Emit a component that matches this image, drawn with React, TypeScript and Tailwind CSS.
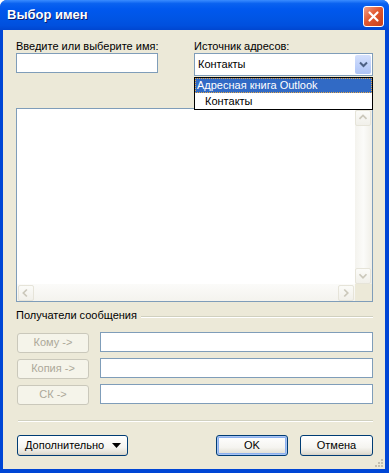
import React from "react";

const font = { fontFamily: '"Liberation Sans", Arial, sans-serif' };

function XpButton({
  children,
  className = "",
  isDefault = false,
  disabled = false,
}: {
  children: React.ReactNode;
  className?: string;
  isDefault?: boolean;
  disabled?: boolean;
}) {
  if (disabled) {
    return (
      <div
        className={`flex items-center justify-center rounded-[3px] border border-[#cac8bb] bg-[#f5f4ea] text-[11px] text-[#aca899] ${className}`}
      >
        {children}
      </div>
    );
  }
  return (
    <div
      className={`flex items-center justify-center rounded-[3px] border border-[#003c74] bg-[linear-gradient(180deg,#ffffff_0%,#f5f4f0_60%,#e3e0d6_90%,#d6d0c5_100%)] text-[11px] text-black ${
        isDefault ? "shadow-[inset_0_0_0_1px_#a9c4f3,inset_0_0_0_2px_#8cb0ee]" : ""
      } ${className}`}
    >
      {children}
    </div>
  );
}

function ScrollBtn({ dir }: { dir: "up" | "down" | "left" | "right" }) {
  const paths: Record<string, string> = {
    up: "M4 9 L8 5 L12 9",
    down: "M4 6 L8 10 L12 6",
    left: "M9 4 L5 8 L9 12",
    right: "M6 4 L10 8 L6 12",
  };
  return (
    <div className="flex h-[16px] w-[16px] items-center justify-center rounded-[2px] border border-[#e6e4d9] bg-[linear-gradient(180deg,#fbfbf8_0%,#f1f0ea_100%)]">
      <svg width="16" height="16" viewBox="0 0 16 16">
        <path d={paths[dir]} fill="none" stroke="#cbc8bb" strokeWidth="2" />
      </svg>
    </div>
  );
}

export default function App() {
  return (
    <div
      className="flex h-[473px] w-[389px] flex-col overflow-hidden rounded-t-[7px] bg-[#0046d5]"
      style={font}
    >
      {/* title bar */}
      <div className="flex h-[30px] shrink-0 items-center bg-[linear-gradient(180deg,#3a8cff_0%,#0a62f0_12%,#0058ee_30%,#0055e5_60%,#0050de_85%,#0046d0_100%)] pl-[7px] pr-[5px]">
        <span className="text-[13px] font-bold text-white [text-shadow:1px_1px_0_#0a1e6e]">
          Выбор имен
        </span>
        <div className="flex-1" />
        <div className="mt-[2px] flex h-[21px] w-[21px] items-center justify-center rounded-[3px] border border-white bg-[linear-gradient(135deg,#f0a08a_0%,#e2582f_45%,#c7401a_100%)]">
          <svg width="13" height="13" viewBox="0 0 13 13">
            <path d="M2.5 2.5 L10.5 10.5 M10.5 2.5 L2.5 10.5" stroke="#fff" strokeWidth="2.2" strokeLinecap="round" />
          </svg>
        </div>
      </div>

      {/* body */}
      <div className="relative mb-[4px] ml-[3px] mr-[4px] flex flex-1 flex-col bg-[#ece9d8] pl-[13px] pr-[12px] pt-[10px] text-[11px] leading-[13px] text-black">
        <div className="flex">
          <div className="flex w-[142px] flex-col">
            <span className="whitespace-nowrap">Введите или выберите имя:</span>
            <div className="h-[20px] border border-[#7f9db9] bg-white" />
          </div>
          <div className="ml-[36px] flex w-[179px] flex-col">
            <span className="whitespace-nowrap">Источник адресов:</span>
            <div className="flex h-[23px] items-center border border-[#7f9db9] bg-white pl-[3px] pr-[1px]">
              <span className="flex-1">Контакты</span>
              <div className="flex h-[19px] w-[16px] items-center justify-center rounded-[2px] bg-[linear-gradient(180deg,#d4e0fc_0%,#bccffa_60%,#aec4f6_100%)]">
                <svg width="9" height="7" viewBox="0 0 9 7">
                  <path d="M1 1.5 L4.5 5 L8 1.5" fill="none" stroke="#4d6185" strokeWidth="2" />
                </svg>
              </div>
            </div>
          </div>
        </div>

        {/* list box */}
        <div className="mt-[32px] flex h-[194px] flex-col border border-[#7f9db9] bg-white">
          <div className="flex flex-1">
            <div className="flex-1" />
            <div className="flex w-[17px] flex-col justify-between bg-[linear-gradient(90deg,#f4f3ee_0%,#fbfbf9_50%,#f0efe8_100%)] pt-[1px]">
              <ScrollBtn dir="up" />
              <ScrollBtn dir="down" />
            </div>
          </div>
          <div className="flex h-[17px]">
            <div className="flex flex-1 items-center justify-between bg-[linear-gradient(180deg,#fbfbf9_0%,#f4f3ee_100%)] pl-[1px] pr-[1px]">
              <ScrollBtn dir="left" />
              <ScrollBtn dir="right" />
            </div>
            <div className="w-[17px] bg-[#ece9d8]" />
          </div>
        </div>

        {/* recipients */}
        <div className="mt-[7px] flex items-center">
          <span className="whitespace-nowrap">Получатели сообщения</span>
          <div className="ml-[4px] mt-[3px] h-[2px] flex-1 border-b border-t border-b-white border-t-[#d0d0bf]" />
        </div>
        <div className="mt-[10px] flex flex-col gap-[6px]">
          {["Кому ->", "Копия ->", "СК ->"].map((t) => (
            <div key={t} className="flex h-[20px] items-center">
              <XpButton disabled className="ml-[1px] mt-[1px] h-[20px] w-[72px]">
                {t}
              </XpButton>
              <div className="ml-[11px] h-[20px] flex-1 border border-[#7f9db9] bg-white" />
            </div>
          ))}
        </div>

        <div className="ml-[2px] mt-[16px] h-[2px] border-b border-t border-b-white border-t-[#d0d0bf]" />

        <div className="mt-[13px] flex items-center">
          <XpButton className="ml-[1px] h-[21px] w-[111px] justify-start gap-[8px] pl-[7px]">
            <span>Дополнительно</span>
            <svg width="9" height="5" viewBox="0 0 9 5">
              <path d="M0 0 L9 0 L4.5 5 Z" fill="#000" />
            </svg>
          </XpButton>
          <div className="flex-1" />
          <XpButton isDefault className="h-[21px] w-[72px]">
            OK
          </XpButton>
          <XpButton className="ml-[12px] h-[21px] w-[73px]">Отмена</XpButton>
        </div>

        {/* resize grip */}
        <svg className="absolute bottom-[1px] right-[1px]" width="10" height="10" viewBox="0 0 10 10">
          {[
            [7, 1],
            [4, 4],
            [7, 4],
            [1, 7],
            [4, 7],
            [7, 7],
          ].map(([x, y]) => (
            <rect key={`${x}-${y}`} x={x} y={y} width="2" height="2" fill="#c2bfb0" />
          ))}
        </svg>

        {/* open dropdown list */}
        <div className="absolute left-[191px] top-[47px] flex h-[33px] w-[179px] flex-col border border-black bg-white">
          <div className="flex h-[15px] items-center border border-dotted border-[#e3a84a] bg-[#316ac5] pl-[1px] text-white">
            Адресная книга Outlook
          </div>
          <div className="flex flex-1 items-center pl-[10px]">Контакты</div>
        </div>
      </div>
    </div>
  );
}
